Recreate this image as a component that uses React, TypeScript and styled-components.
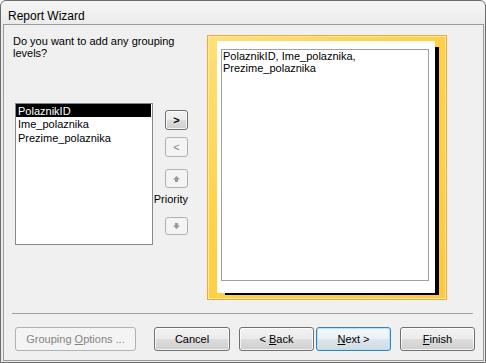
import React from 'react';
import styled, { createGlobalStyle, css } from 'styled-components';

const Global = createGlobalStyle`
  html, body { margin: 0; padding: 0; background: #ffffff; }
  body { font-family: "Liberation Sans", Arial, sans-serif; }
`;

const Window = styled.div`
  box-sizing: border-box;
  width: 486px;
  height: 363px;
  border: 1px solid #6c6c6c;
  border-radius: 6px 6px 0 0;
  background: linear-gradient(#f6f6f6, #eaeaea 24px, #ececec);
  display: flex;
  flex-direction: column;
  padding: 0 1px 1px 2px;
`;

const TitleBar = styled.div`
  box-sizing: border-box;
  height: 23px;
  padding: 8px 0 0 5px;
  font-size: 12px;
  line-height: 14px;
  color: #000;
`;

const Client = styled.div`
  flex: 1;
  border: 1px solid #9b9b9b;
  background: #f0f0f0;
  display: flex;
  flex-direction: column;
  font-size: 11px;
  color: #000;
`;

const Main = styled.div`
  box-sizing: border-box;
  height: 288px;
  padding-top: 10px;
  display: flex;
`;

const LeftCol = styled.div`
  box-sizing: border-box;
  width: 203px;
  padding-left: 9px;
  display: flex;
  flex-direction: column;
`;

const Prompt = styled.div`
  width: 172px;
  line-height: 12px;
`;

const ListRow = styled.div`
  margin-top: 44px;
  display: flex;
`;

const ListBox = styled.div`
  box-sizing: border-box;
  width: 138px;
  height: 142px;
  margin-left: 2px;
  border: 1px solid #828790;
  background: #fff;
  padding-right: 1px;
`;

const ListItem = styled.div<{ $selected?: boolean }>`
  height: 14px;
  line-height: 14px;
  padding-left: 2px;
  white-space: nowrap;
  ${(p) =>
    p.$selected &&
    css`
      background: #000;
      color: #fff;
      height: 13px;
    `}
`;

const ControlCol = styled.div`
  width: 35px;
  padding-top: 7px;
  display: flex;
  flex-direction: column;
  align-items: flex-end;
`;

const winButton = css<{ $disabled?: boolean; $default?: boolean }>`
  box-sizing: border-box;
  border: 1px solid #707070;
  border-radius: 3px;
  background: linear-gradient(#f2f2f2 0%, #ebebeb 50%, #dddddd 50%, #cfcfcf 100%);
  box-shadow: inset 0 0 0 1px rgba(255, 255, 255, 0.75);
  font-family: "Liberation Sans", Arial, sans-serif;
  font-size: 11px;
  color: #000;
  padding: 0;
  display: flex;
  align-items: center;
  justify-content: center;
  white-space: pre;
  ${(p) =>
    p.$disabled &&
    css`
      border-color: #adb2b5;
      background: #f4f4f4;
      box-shadow: none;
      color: #838383;
    `}
  ${(p) =>
    p.$default &&
    css`
      border-color: #3c7fb1;
      background: linear-gradient(#f3f8fb 0%, #eaf1f5 50%, #dce6ec 50%, #d0dce3 100%);
      box-shadow: inset 0 0 0 1px rgba(170, 225, 250, 0.9);
    `}
`;

const SmallButton = styled.div<{ $disabled?: boolean; $h: number; $mt: number }>`
  ${winButton};
  width: 23px;
  height: ${(p) => p.$h}px;
  margin-top: ${(p) => p.$mt}px;
  font-weight: ${(p) => (p.$disabled ? 'normal' : 'bold')};
`;

const PriorityLabel = styled.div`
  margin-top: 5px;
  line-height: 13px;
  white-space: nowrap;
`;

const PreviewFrame = styled.div`
  box-sizing: border-box;
  width: 240px;
  height: 265px;
  border: 1px solid #eea93c;
  background: linear-gradient(135deg, #ffe07a 0%, #ffd247 40%, #ffca3c 100%);
  box-shadow: inset 0 0 0 1px #ffe9a0;
  padding: 5px 0 0 9px;
`;

const Paper = styled.div`
  box-sizing: border-box;
  width: 218px;
  height: 252px;
  background: #fff;
  box-shadow: 6px 4px 0 -2px #000;
  padding: 8px 0 0 4px;
`;

const FieldBox = styled.div`
  box-sizing: border-box;
  width: 208px;
  height: 232px;
  border: 1px solid #a0a0a0;
  padding: 0 2px 0 1px;
  line-height: 12px;
`;

const Separator = styled.div`
  height: 1px;
  margin: 0 10px 0 8px;
  background: #a0a0a0;
`;

const Footer = styled.div`
  margin-top: 13px;
  padding-left: 11px;
  display: flex;
`;

const DialogButton = styled.div<{ $disabled?: boolean; $default?: boolean; $w: number; $ml: number }>`
  ${winButton};
  height: 24px;
  width: ${(p) => p.$w}px;
  margin-left: ${(p) => p.$ml}px;
`;

const Arrow = ({ down }: { down?: boolean }) => (
  <svg width="7" height="6" viewBox="0 0 7 6" style={down ? { transform: 'rotate(180deg)' } : undefined}>
    <polygon points="3.5,0 7,3.5 5,3.5 5,6 2,6 2,3.5 0,3.5" fill="#9a9a9a" />
  </svg>
);

export default function App() {
  return (
    <>
      <Global />
      <Window>
        <TitleBar>Report Wizard</TitleBar>
        <Client>
          <Main>
            <LeftCol>
              <Prompt>Do you want to add any grouping levels?</Prompt>
              <ListRow>
                <ListBox>
                  <ListItem $selected>PolaznikID</ListItem>
                  <ListItem>Ime_polaznika</ListItem>
                  <ListItem>Prezime_polaznika</ListItem>
                </ListBox>
                <ControlCol>
                  <SmallButton $h={20} $mt={0}>&gt;</SmallButton>
                  <SmallButton $h={20} $mt={7} $disabled>&lt;</SmallButton>
                  <SmallButton $h={19} $mt={12} $disabled>
                    <Arrow />
                  </SmallButton>
                  <PriorityLabel>Priority</PriorityLabel>
                  <SmallButton $h={18} $mt={11} $disabled>
                    <Arrow down />
                  </SmallButton>
                </ControlCol>
              </ListRow>
            </LeftCol>
            <PreviewFrame>
              <Paper>
                <FieldBox>PolaznikID, Ime_polaznika, Prezime_polaznika</FieldBox>
              </Paper>
            </PreviewFrame>
          </Main>
          <Separator />
          <Footer>
            <DialogButton $w={121} $ml={0} $disabled>
              <span>Grouping <u>O</u>ptions ...</span>
            </DialogButton>
            <DialogButton $w={76} $ml={18}>
              <span>Cancel</span>
            </DialogButton>
            <DialogButton $w={75} $ml={9}>
              <span>&lt; <u>B</u>ack</span>
            </DialogButton>
            <DialogButton $w={75} $ml={2} $default>
              <span><u>N</u>ext &gt;</span>
            </DialogButton>
            <DialogButton $w={75} $ml={9}>
              <span><u>F</u>inish</span>
            </DialogButton>
          </Footer>
        </Client>
      </Window>
    </>
  );
}
